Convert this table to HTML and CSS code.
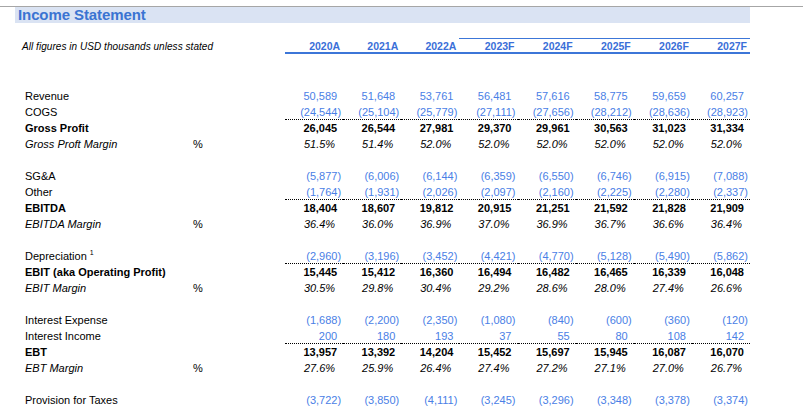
FILE: index.html
```html
<!DOCTYPE html>
<html>
<head>
<meta charset="utf-8">
<link rel="stylesheet" href="styles.css">
</head>
<body>
<div class="sheet">
  <div class="topline"></div>
  <div class="titlebar">Income Statement</div>
  <div class="row head">
    <div class="sub">All figures in USD thousands unless stated</div>
    <div class="unit"></div>
    <div class="c yr">2020A</div><div class="c yr">2021A</div><div class="c yr">2022A</div>
    <div class="c yr fc">2023F</div><div class="c yr fc">2024F</div><div class="c yr fc">2025F</div><div class="c yr fc">2026F</div><div class="c yr fc">2027F</div>
  </div>
  <div class="spacer"></div>

  <div class="row in"><div class="lbl">Revenue</div><div class="unit"></div>
    <div class="c pos">50,589</div><div class="c pos">51,648</div><div class="c pos">53,761</div><div class="c pos">56,481</div><div class="c pos">57,616</div><div class="c pos">58,775</div><div class="c pos">59,659</div><div class="c pos">60,257</div></div>
  <div class="row in dot"><div class="lbl">COGS</div><div class="unit"></div>
    <div class="c neg">(24,544)</div><div class="c neg">(25,104)</div><div class="c neg">(25,779)</div><div class="c neg">(27,111)</div><div class="c neg">(27,656)</div><div class="c neg">(28,212)</div><div class="c neg">(28,636)</div><div class="c neg">(28,923)</div></div>
  <div class="row tot"><div class="lbl">Gross Profit</div><div class="unit"></div>
    <div class="c pos">26,045</div><div class="c pos">26,544</div><div class="c pos">27,981</div><div class="c pos">29,370</div><div class="c pos">29,961</div><div class="c pos">30,563</div><div class="c pos">31,023</div><div class="c pos">31,334</div></div>
  <div class="row mar"><div class="lbl">Gross Proft Margin</div><div class="unit">%</div>
    <div class="c pct">51.5%</div><div class="c pct">51.4%</div><div class="c pct">52.0%</div><div class="c pct">52.0%</div><div class="c pct">52.0%</div><div class="c pct">52.0%</div><div class="c pct">52.0%</div><div class="c pct">52.0%</div></div>
  <div class="row blank"></div>

  <div class="row in"><div class="lbl">SG&amp;A</div><div class="unit"></div>
    <div class="c neg">(5,877)</div><div class="c neg">(6,006)</div><div class="c neg">(6,144)</div><div class="c neg">(6,359)</div><div class="c neg">(6,550)</div><div class="c neg">(6,746)</div><div class="c neg">(6,915)</div><div class="c neg">(7,088)</div></div>
  <div class="row in dot"><div class="lbl">Other</div><div class="unit"></div>
    <div class="c neg">(1,764)</div><div class="c neg">(1,931)</div><div class="c neg">(2,026)</div><div class="c neg">(2,097)</div><div class="c neg">(2,160)</div><div class="c neg">(2,225)</div><div class="c neg">(2,280)</div><div class="c neg">(2,337)</div></div>
  <div class="row tot"><div class="lbl">EBITDA</div><div class="unit"></div>
    <div class="c pos">18,404</div><div class="c pos">18,607</div><div class="c pos">19,812</div><div class="c pos">20,915</div><div class="c pos">21,251</div><div class="c pos">21,592</div><div class="c pos">21,828</div><div class="c pos">21,909</div></div>
  <div class="row mar"><div class="lbl">EBITDA Margin</div><div class="unit">%</div>
    <div class="c pct">36.4%</div><div class="c pct">36.0%</div><div class="c pct">36.9%</div><div class="c pct">37.0%</div><div class="c pct">36.9%</div><div class="c pct">36.7%</div><div class="c pct">36.6%</div><div class="c pct">36.4%</div></div>
  <div class="row blank"></div>

  <div class="row in dot"><div class="lbl">Depreciation <sup>1</sup></div><div class="unit"></div>
    <div class="c neg">(2,960)</div><div class="c neg">(3,196)</div><div class="c neg">(3,452)</div><div class="c neg">(4,421)</div><div class="c neg">(4,770)</div><div class="c neg">(5,128)</div><div class="c neg">(5,490)</div><div class="c neg">(5,862)</div></div>
  <div class="row tot"><div class="lbl">EBIT (aka Operating Profit)</div><div class="unit"></div>
    <div class="c pos">15,445</div><div class="c pos">15,412</div><div class="c pos">16,360</div><div class="c pos">16,494</div><div class="c pos">16,482</div><div class="c pos">16,465</div><div class="c pos">16,339</div><div class="c pos">16,048</div></div>
  <div class="row mar"><div class="lbl">EBIT Margin</div><div class="unit">%</div>
    <div class="c pct">30.5%</div><div class="c pct">29.8%</div><div class="c pct">30.4%</div><div class="c pct">29.2%</div><div class="c pct">28.6%</div><div class="c pct">28.0%</div><div class="c pct">27.4%</div><div class="c pct">26.6%</div></div>
  <div class="row blank"></div>

  <div class="row in"><div class="lbl">Interest Expense</div><div class="unit"></div>
    <div class="c neg">(1,688)</div><div class="c neg">(2,200)</div><div class="c neg">(2,350)</div><div class="c neg">(1,080)</div><div class="c neg">(840)</div><div class="c neg">(600)</div><div class="c neg">(360)</div><div class="c neg">(120)</div></div>
  <div class="row in dot"><div class="lbl">Interest Income</div><div class="unit"></div>
    <div class="c pos">200</div><div class="c pos">180</div><div class="c pos">193</div><div class="c pos">37</div><div class="c pos">55</div><div class="c pos">80</div><div class="c pos">108</div><div class="c pos">142</div></div>
  <div class="row tot"><div class="lbl">EBT</div><div class="unit"></div>
    <div class="c pos">13,957</div><div class="c pos">13,392</div><div class="c pos">14,204</div><div class="c pos">15,452</div><div class="c pos">15,697</div><div class="c pos">15,945</div><div class="c pos">16,087</div><div class="c pos">16,070</div></div>
  <div class="row mar"><div class="lbl">EBT Margin</div><div class="unit">%</div>
    <div class="c pct">27.6%</div><div class="c pct">25.9%</div><div class="c pct">26.4%</div><div class="c pct">27.4%</div><div class="c pct">27.2%</div><div class="c pct">27.1%</div><div class="c pct">27.0%</div><div class="c pct">26.7%</div></div>
  <div class="row blank"></div>

  <div class="row in"><div class="lbl">Provision for Taxes</div><div class="unit"></div>
    <div class="c neg">(3,722)</div><div class="c neg">(3,850)</div><div class="c neg">(4,111)</div><div class="c neg">(3,245)</div><div class="c neg">(3,296)</div><div class="c neg">(3,348)</div><div class="c neg">(3,378)</div><div class="c neg">(3,374)</div></div>
</div>
</body>
</html>
```

FILE: styles.css
```css
html, body {
  margin: 0;
  padding: 0;
  background: #ffffff;
}

body {
  font-family: "Liberation Sans", Arial, sans-serif;
  font-size: 11px;
  color: #000000;
  overflow: hidden;
}

.sheet {
  width: 803px;
  height: 418px;
  padding-top: 6px;
  box-sizing: border-box;
}

.topline {
  height: 0;
  border-top: 1px solid #a6a6a6;
}

.titlebar {
  margin-left: 15px;
  width: 735px;
  height: 16px;
  box-sizing: border-box;
  padding-left: 3px;
  background: #dae3f3;
  color: #3a74d2;
  font-weight: bold;
  font-size: 15px;
  line-height: 16px;
  letter-spacing: -0.1px;
  margin-bottom: 15px;
}

.row {
  display: grid;
  grid-template-columns: 193px 92px repeat(8, 58.125px);
  height: 16px;
  line-height: 16px;
  white-space: nowrap;
}

.row > div {
  box-sizing: border-box;
  height: 16px;
}

.lbl {
  padding-left: 25px;
}

.lbl sup {
  font-size: 7px;
  line-height: 0;
  vertical-align: 5px;
}

.c {
  text-align: right;
}

.pos { padding-right: 6px; }
.neg { padding-right: 2px; }
.pct { padding-right: 8px; }

.in .c { color: #4a80e6; }
.tot { font-weight: bold; }
.mar { font-style: italic; }
.mar .unit { font-style: normal; }

.dot .c {
  border-bottom: 1px dotted #000000;
}

/* header row */
.head > div {
  border-top: 1px solid transparent;
  line-height: 15px;
}

.sub {
  padding-left: 22px;
  font-style: italic;
  font-size: 10px;
  letter-spacing: 0.05px;
}

.yr {
  border-bottom: 2px solid #3c76d8;
  color: #3a6fd8;
  font-weight: bold;
  font-size: 10.5px;
  padding-right: 3px;
}

.head > .fc {
  border-top: 1px solid #3c76d8;
}

.spacer {
  height: 34px;
}
```
